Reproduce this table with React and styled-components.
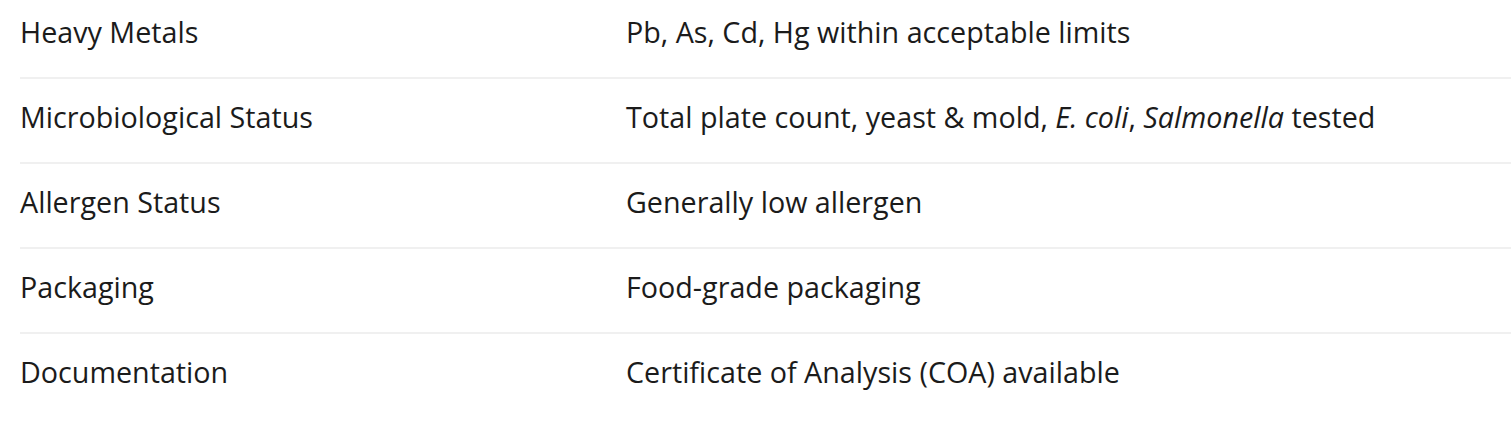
import React from "react";
import styled, { createGlobalStyle } from "styled-components";

const Global = createGlobalStyle`
  html, body { margin: 0; padding: 0; background: #ffffff; }
  body { font-family: "Open Sans", "Noto Sans", sans-serif; color: #1b1b1b; }
`;

const Page = styled.div`
  padding: 0 0 0 20px;
  overflow: hidden;
`;

const Table = styled.div`
  margin-top: -6px;
  display: flex;
  flex-direction: column;
`;

const Row = styled.div`
  display: grid;
  grid-template-columns: 606px 1fr;
  padding: 17px 0 24px;
  border-bottom: ${(p) => (p.$last ? "none" : "2px solid #f0f0f0")};
`;

const Cell = styled.div`
  font-size: 28.7px;
  line-height: 42px;
  white-space: nowrap;
  em { font-style: italic; }
`;

const rows = [
  ["Heavy Metals", <>Pb, As, Cd, Hg within acceptable limits</>],
  [
    "Microbiological Status",
    <>
      Total plate count, yeast &amp; mold, <em>E. coli</em>, <em>Salmonella</em> tested
    </>,
  ],
  ["Allergen Status", <>Generally low allergen</>],
  ["Packaging", <>Food-grade packaging</>],
  ["Documentation", <>Certificate of Analysis (COA) available</>],
];

export default function App() {
  return (
    <Page>
      <Global />
      <Table>
        {rows.map(([k, v], i) => (
          <Row key={k} $last={i === rows.length - 1}>
            <Cell>{k}</Cell>
            <Cell>{v}</Cell>
          </Row>
        ))}
      </Table>
    </Page>
  );
}
